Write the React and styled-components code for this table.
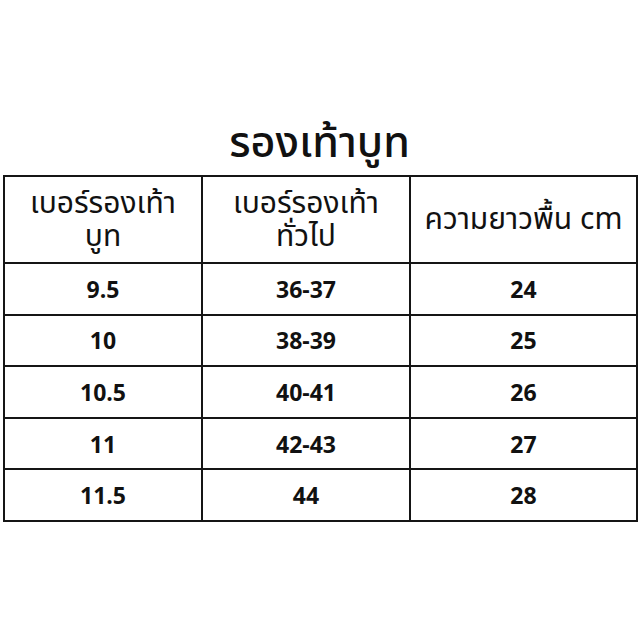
import styled, { createGlobalStyle } from "styled-components";

const GlobalStyle = createGlobalStyle`
    body {
        margin: 0;
        background: #ffffff;
    }
`

const StyledPage = styled.main`
    width: 640px;
    height: 640px;
    padding: 118px 0 0 3px;
    box-sizing: border-box;
    font-family: "Noto Sans Thai", "Noto Sans", "Open Sans", sans-serif;
    color: #111111;
`
const StyledTitle = styled.h1`
    width: 633px;
    margin: 0 0 5px;
    font-size: 43px;
    font-weight: 500;
    line-height: 52px;
    text-align: center;
`
const StyledTable = styled.table`
    width: 633px;
    border-collapse: collapse;
    table-layout: fixed;
`
const StyledHeadCell = styled.th`
    height: 83px;
    padding: 2px 0 0;
    border: 2px solid #151515;
    font-size: 30px;
    font-weight: 400;
    line-height: 33px;
    text-align: center;
    vertical-align: middle;
    white-space: nowrap;
`
const StyledCell = styled.td`
    height: 49.6px;
    padding: 0;
    border: 2px solid #151515;
    font-family: "Open Sans", sans-serif;
    font-size: 23px;
    font-weight: 700;
    text-align: center;
    vertical-align: middle;
`

const columns = [198, 208, 227]

const rows = [
    ["9.5", "36-37", "24"],
    ["10", "38-39", "25"],
    ["10.5", "40-41", "26"],
    ["11", "42-43", "27"],
    ["11.5", "44", "28"],
]

const App = () => {
    return (
        <StyledPage>
            <GlobalStyle />
            <StyledTitle>รองเท้าบูท</StyledTitle>
            <StyledTable>
                <colgroup>
                    {columns.map(w => <col key={w} style={{ width: w }} />)}
                </colgroup>
                <thead>
                    <tr>
                        <StyledHeadCell>เบอร์รองเท้า<br />บูท</StyledHeadCell>
                        <StyledHeadCell>เบอร์รองเท้า<br />ทั่วไป</StyledHeadCell>
                        <StyledHeadCell>ความยาวพื้น cm</StyledHeadCell>
                    </tr>
                </thead>
                <tbody>
                    {rows.map(row => (
                        <tr key={row[0]}>
                            {row.map((value, i) => <StyledCell key={i}>{value}</StyledCell>)}
                        </tr>
                    ))}
                </tbody>
            </StyledTable>
        </StyledPage>
    )
}

export default App
